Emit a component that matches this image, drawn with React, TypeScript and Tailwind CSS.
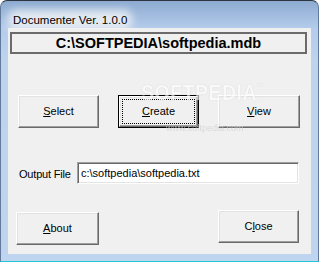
import React from 'react';

const raised =
    'border border-t-white border-l-white border-r-[#696969] border-b-[#696969] shadow-[inset_-1px_-1px_0_#a0a0a0,inset_1px_1px_0_#e3e3e3] bg-[#f0f0f0]';

interface ButtonProps {
    children: React.ReactNode;
    className?: string;
    isDefault?: boolean;
}

const WinButton: React.FC<ButtonProps> = ({ children, className = '', isDefault = false }) => {
    if (isDefault) {
        // default button: black frame + dotted focus rectangle
        return (
            <button className={`h-[33px] border border-black p-0 ${className}`}>
                <span className={`flex h-full w-full p-[2px] ${raised}`}>
                    <span className="flex h-full w-full items-center justify-center border border-dotted border-black">
                        {children}
                    </span>
                </span>
            </button>
        );
    }
    return (
        <button className={`flex h-[33px] items-center justify-center ${raised} ${className}`}>
            {children}
        </button>
    );
};

const U: React.FC<{ children: React.ReactNode }> = ({ children }) => (
    <span className="underline underline-offset-[1px]">{children}</span>
);

const App: React.FC = () => {
    return (
        <div className="h-[262px] w-[319px] bg-white font-['Liberation_Sans',Arial,sans-serif] text-[11px] text-black">
            <div className="flex h-full w-full flex-col overflow-hidden rounded-t-[7px] border border-t-[#2e3440] border-x-[#61799a] border-b-[#23c6d6] bg-[linear-gradient(180deg,#8caad0_0px,#b4cceb_27px,#bdd3ee_60px,#bfd5ef_100%)]">
                {/* title bar */}
                <div className="h-[27px] shrink-0 pl-[12px] pt-[11px]">
                    <span className="relative inline-block">
                        <span className="absolute -inset-x-[5px] -inset-y-[4px] rounded-[8px] bg-[#e4eaf1] blur-[4px]" />
                        <span className="relative block text-[11.5px] leading-[13px]">Documenter Ver. 1.0.0</span>
                    </span>
                </div>

                <div className="flex shrink-0 pl-[7px]">
                    {/* client area */}
                    <div className="relative flex h-[226px] w-[303px] flex-col bg-[#f0f0f0]">
                        <div className="ml-[2px] mt-[4px] flex h-[22px] w-[297px] items-center justify-center border-2 border-[#6b6b6b] text-[14.5px] font-bold leading-none">
                            C:\SOFTPEDIA\softpedia.mdb
                        </div>

                        <div className="ml-[10px] mt-[41px] flex gap-[19px]">
                            <WinButton className="w-[81px]">
                                <U>S</U>elect
                            </WinButton>
                            <WinButton className="w-[81px]" isDefault>
                                <span>
                                    <U>C</U>reate
                                </span>
                            </WinButton>
                            <WinButton className="w-[82px]">
                                <U>V</U>iew
                            </WinButton>
                        </div>

                        <div className="mt-[34px] flex items-center">
                            <span className="ml-[11px] mt-[3px] w-[58px] tracking-[-0.2px]">Output File</span>
                            <div className="flex h-[22px] w-[222px] items-center border border-t-[#a0a0a0] border-l-[#a0a0a0] border-r-white border-b-white bg-white pl-[3px] shadow-[inset_1px_1px_0_#696969,inset_-1px_-1px_0_#e3e3e3]">
                                c:\softpedia\softpedia.txt
                            </div>
                        </div>

                        <div className="mt-[26px] flex items-start">
                            <WinButton className="ml-[8px] mt-[2px] w-[83px]">
                                <U>A</U>bout
                            </WinButton>
                            <WinButton className="ml-[119px] w-[81px]">
                                C<U>l</U>ose
                            </WinButton>
                        </div>

                        {/* watermark */}
                        <div className="pointer-events-none absolute left-[133px] top-[54px] origin-top-left scale-y-110 select-none text-[19.5px] font-bold leading-none tracking-[0.5px] text-white opacity-60 [text-shadow:0_0_1px_#a8a8a8]">
                            SOFTPEDIA<span className="align-top text-[7px]">™</span>
                        </div>
                        <div className="pointer-events-none absolute left-[158px] top-[96px] select-none text-[9px] leading-none text-[#cfcfcf] opacity-70">
                            www.softpedia.com
                        </div>
                    </div>
                </div>
            </div>
        </div>
    );
};

export default App;
